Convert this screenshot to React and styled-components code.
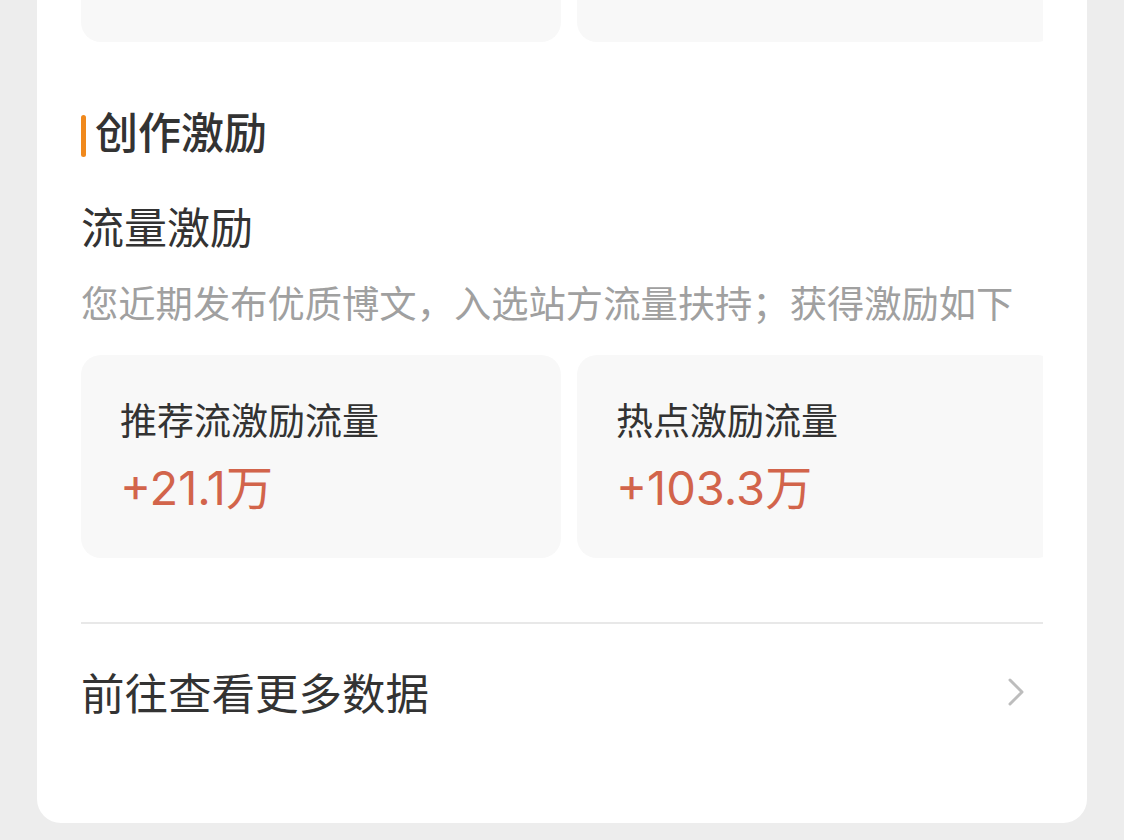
import React from "react";
import styled, { createGlobalStyle } from "styled-components";

const Global = createGlobalStyle`
  html, body { margin: 0; padding: 0; background: #ededed; }
  body { font-family: "Noto Sans CJK SC", "Noto Sans", sans-serif; }
  * { box-sizing: border-box; }
`;

const Page = styled.div`
  height: 840px;
  overflow: hidden;
  padding: 0 37px;
`;

const Card = styled.div`
  width: 1050px;
  margin-top: -200px;
  background: #ffffff;
  border-radius: 0 0 24px 24px;
  padding: 39px 44px 63px;
  display: flex;
  flex-direction: column;
`;

const TileRow = styled.div`
  display: flex;
  gap: 16px;
  overflow: hidden;
  margin-top: ${(p) => p.$mt || 0}px;
`;

const Tile = styled.div`
  flex: 0 0 480px;
  height: 203px;
  border-radius: 20px;
  background: #f8f8f8;
  padding: 40px 39px 0;
  display: flex;
  flex-direction: column;
`;

const TileLabel = styled.div`
  font-size: 37px;
  line-height: 48px;
  color: #333333;
  white-space: nowrap;
`;

const TileValue = styled.div`
  margin-top: 17px;
  font-family: Inter, "Noto Sans CJK SC", sans-serif;
  font-size: 47px;
  line-height: 56px;
  letter-spacing: 0;
  font-variant-numeric: proportional-nums;
  color: #d2644b;
  white-space: nowrap;
`;

const SectionHeader = styled.div`
  margin-top: 73px;
  height: 42px;
  display: flex;
  align-items: center;
  gap: 9px;
`;

const Accent = styled.span`
  width: 5px;
  height: 42px;
  border-radius: 3px;
  background: #f0891d;
`;

const SectionTitle = styled.h2`
  margin: 0;
  font-size: 43px;
  line-height: 42px;
  font-weight: 500;
  color: #333333;
  position: relative;
  top: -6px;
`;

const SubTitle = styled.div`
  margin-top: 43px;
  font-size: 43px;
  line-height: 50px;
  color: #333333;
`;

const Desc = styled.div`
  margin-top: 28px;
  font-size: 37.3px;
  line-height: 48px;
  color: #a0a0a0;
  white-space: nowrap;
`;

const Divider = styled.div`
  margin-top: 64px;
  height: 2px;
  background: #e8e8e8;
`;

const LinkRow = styled.div`
  height: 136px;
  display: flex;
  align-items: center;
  justify-content: space-between;
  padding-right: 18px;
`;

const LinkText = styled.span`
  font-size: 43.5px;
  line-height: 50px;
  color: #333333;
`;

const Chevron = () => (
  <svg width="18" height="30" viewBox="0 0 18 30" fill="none">
    <path
      d="M3 3 L15 15 L3 27"
      stroke="#bdbdbd"
      strokeWidth="3"
      strokeLinecap="round"
      strokeLinejoin="round"
    />
  </svg>
);

const rewards = [
  { label: "推荐流激励流量", value: "+21.1万" },
  { label: "热点激励流量", value: "+103.3万" },
];

export default function App() {
  return (
    <>
      <Global />
      <Page>
        <Card>
          <TileRow>
            <Tile />
            <Tile />
          </TileRow>
          <SectionHeader>
            <Accent />
            <SectionTitle>创作激励</SectionTitle>
          </SectionHeader>
          <SubTitle>流量激励</SubTitle>
          <Desc>您近期发布优质博文，入选站方流量扶持；获得激励如下</Desc>
          <TileRow $mt={29}>
            {rewards.map((r) => (
              <Tile key={r.label}>
                <TileLabel>{r.label}</TileLabel>
                <TileValue>{r.value}</TileValue>
              </Tile>
            ))}
          </TileRow>
          <Divider />
          <LinkRow>
            <LinkText>前往查看更多数据</LinkText>
            <Chevron />
          </LinkRow>
        </Card>
      </Page>
    </>
  );
}
